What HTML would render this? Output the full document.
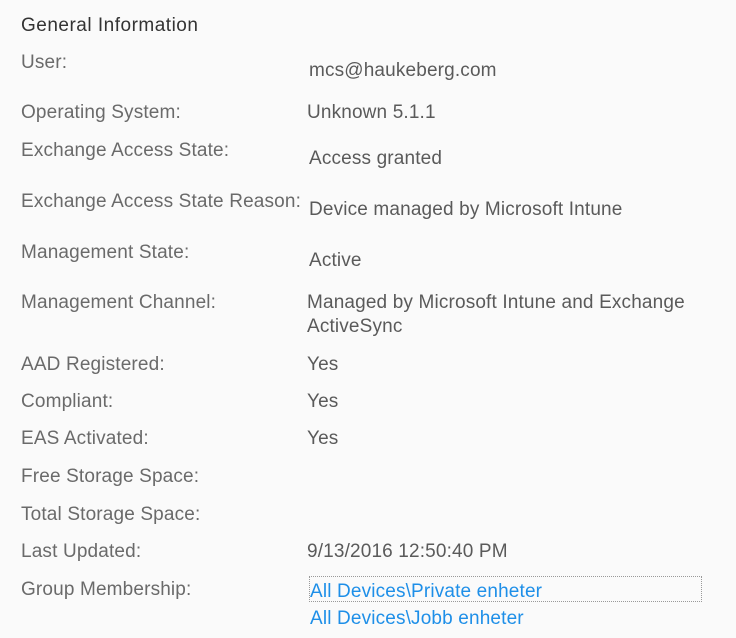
<!DOCTYPE html>
<html><head><meta charset="utf-8"><style>
body{margin:0;width:736px;height:638px;background:#fafafa;font-family:"Liberation Sans",sans-serif;font-size:19px;letter-spacing:0.15px;overflow:hidden;position:relative}
div{position:absolute;line-height:20px;white-space:nowrap;margin-top:1px}
.l{left:21px;color:#6a6a6a}
.v{left:307px;color:#5a5a5a}
.a{left:310px;color:#1e8fe8}
</style></head><body>
<div style="left:21px;top:15px;color:#333;letter-spacing:0.5px">General Information</div>
<div class="l" style="top:52px">User:</div><div class="v" style="top:60px;left:309px">mcs@haukeberg.com</div>
<div class="l" style="top:102px">Operating System:</div><div class="v" style="top:102px">Unknown 5.1.1</div>
<div class="l" style="top:140px">Exchange Access State:</div><div class="v" style="top:148px;left:309px">Access granted</div>
<div class="l" style="top:191px">Exchange Access State Reason:</div><div class="v" style="top:199px;left:309px">Device managed by Microsoft Intune</div>
<div class="l" style="top:242px">Management State:</div><div class="v" style="top:250px;left:309px">Active</div>
<div class="l" style="top:292px">Management Channel:</div><div class="v" style="top:292px">Managed by Microsoft Intune and Exchange</div>
<div class="v" style="top:316px">ActiveSync</div>
<div class="l" style="top:354px">AAD Registered:</div><div class="v" style="top:354px">Yes</div>
<div class="l" style="top:391px">Compliant:</div><div class="v" style="top:391px">Yes</div>
<div class="l" style="top:428px">EAS Activated:</div><div class="v" style="top:428px">Yes</div>
<div class="l" style="top:466px">Free Storage Space:</div>
<div class="l" style="top:504px">Total Storage Space:</div>
<div class="l" style="top:541px">Last Updated:</div><div class="v" style="top:541px">9/13/2016 12:50:40 PM</div>
<div class="l" style="top:579px">Group Membership:</div>
<div style="left:309px;top:575px;width:391px;height:24px;border:1px dotted #999"></div>
<div class="a" style="top:581px">All Devices\Private enheter</div>
<div class="a" style="top:608px">All Devices\Jobb enheter</div>
</body></html>
